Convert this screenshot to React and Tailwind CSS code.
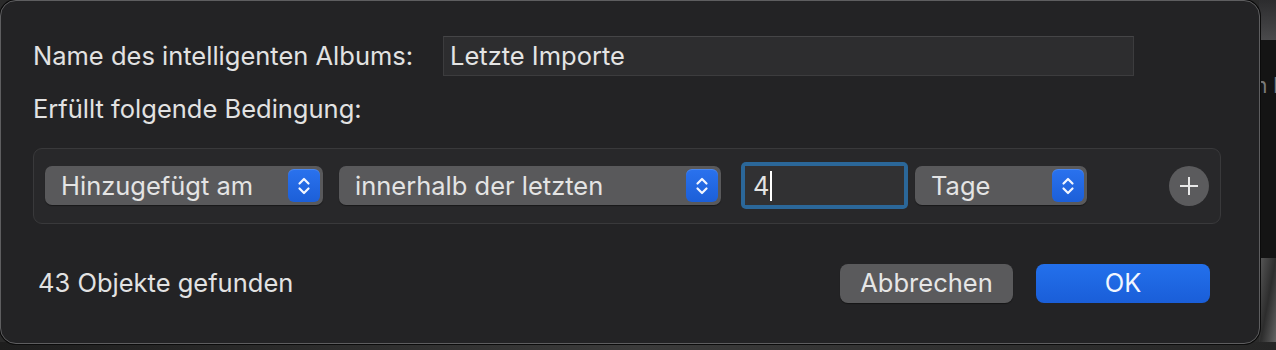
import React from "react";

function Stepper() {
  return (
    <span className="flex h-[33px] w-[32px] items-center justify-center rounded-[6px] bg-gradient-to-b from-[#2a72ee] to-[#1c5fd8] shadow-[inset_0_1px_0_rgba(255,255,255,0.15)]">
      <svg width="16" height="24" viewBox="0 0 16 24" fill="none">
        <path d="M3.5 9.5L8 5L12.5 9.5" stroke="#f2f6ff" strokeWidth="2.2" strokeLinecap="round" strokeLinejoin="round" />
        <path d="M3.5 14.5L8 19L12.5 14.5" stroke="#f2f6ff" strokeWidth="2.2" strokeLinecap="round" strokeLinejoin="round" />
      </svg>
    </span>
  );
}

function PopUp({ label, width }) {
  return (
    <div
      className={`flex h-[39px] items-center justify-between rounded-[7px] bg-[#59595b] pl-[16px] pr-[3px] shadow-[0_1px_1px_rgba(0,0,0,0.4)] ${width}`}
    >
      <span className="text-[25.5px] leading-none text-[#e4e4e4]">{label}</span>
      <Stepper />
    </div>
  );
}

export default function App() {
  return (
    <div
      className="relative flex h-[350px] w-[1276px] overflow-hidden bg-[#2a2a2a]"
      style={{ fontFamily: "Inter, 'Noto Sans', 'Liberation Sans', sans-serif" }}
    >
      {/* background photo strip on the right */}
      <div className="absolute right-0 top-0 flex h-full w-[17px] flex-col">
        <div className="h-[40px] bg-gradient-to-b from-[#2c2c2e] to-[#4a4a4c]" />
        <div className="relative h-[218px] overflow-hidden bg-[#141414]">
          <span className="absolute left-[-4px] top-[30px] whitespace-nowrap text-[21px] text-[#7a7a7a]">n b</span>
        </div>
        <div className="flex-1 bg-gradient-to-br from-[#5a5a5a] via-[#2d2d2d] to-[#6a6a6a]" />
      </div>
      <div className="absolute bottom-0 left-0 h-[8px] w-full bg-gradient-to-r from-[#1e1e1e] via-[#3a3a3a] to-[#262626]" />

      {/* dialog */}
      <div className="relative z-10 flex h-[344px] w-[1260px] flex-col rounded-[16px] border border-[#5e5e60] bg-[#232325] pl-[32px] pr-[49px] pt-[35px] text-[#e2e2e2] shadow-[0_0_0_1px_#0b0b0b]">
        <div className="flex items-center">
          <span className="w-[410px] text-[25.5px] leading-none">Name des intelligenten Albums:</span>
          <div className="flex h-[40px] w-[691px] items-center border border-[#3c3c3e] border-t-[#454547] bg-[#2d2d2f] pl-[6px] text-[25.5px] leading-none text-[#e4e4e4]">
            Letzte Importe
          </div>
        </div>

        <div className="mt-[20px] text-[25.5px] leading-none">Erfüllt folgende Bedingung:</div>

        <div className="mt-[26px] flex h-[76px] w-[1188px] items-center rounded-[9px] border border-[#39393b] bg-[#28282a] pl-[11px] pr-[11px]">
          <PopUp label="Hinzugefügt am" width="w-[278px]" />
          <div className="ml-[16px]">
            <PopUp label="innerhalb der letzten" width="w-[382px]" />
          </div>
          <div className="ml-[20px] rounded-[5px] bg-[#2b6799] p-[4px]">
            <div className="flex h-[39px] w-[159px] items-center bg-[#313133] pl-[8px] text-[25.5px] leading-none text-[#e4e4e4]">
              4<span className="ml-[1px] h-[30px] w-[2px] bg-white" />
            </div>
          </div>
          <div className="ml-[7px]">
            <PopUp label="Tage" width="w-[172px]" />
          </div>
          <div className="ml-auto flex h-[40px] w-[40px] items-center justify-center rounded-full bg-[#5b5b5d]">
            <svg width="22" height="22" viewBox="0 0 22 22">
              <path d="M11 2V20M2 11H20" stroke="#e8e8e8" strokeWidth="2" />
            </svg>
          </div>
        </div>

        <div className="mt-[40px] flex items-center">
          <span className="ml-[5px] text-[25.5px] leading-none">43 Objekte gefunden</span>
          <button className="ml-auto h-[39px] w-[173px] rounded-[8px] bg-[#5a5a5c] text-[25.5px] leading-none text-[#e6e6e6] shadow-[0_1px_1px_rgba(0,0,0,0.4)]">
            Abbrechen
          </button>
          <button className="ml-[23px] h-[39px] w-[174px] rounded-[8px] bg-gradient-to-b from-[#2370ec] to-[#1a5ed8] text-[25.5px] leading-none text-[#f2f6ff]">
            OK
          </button>
        </div>
      </div>
    </div>
  );
}
